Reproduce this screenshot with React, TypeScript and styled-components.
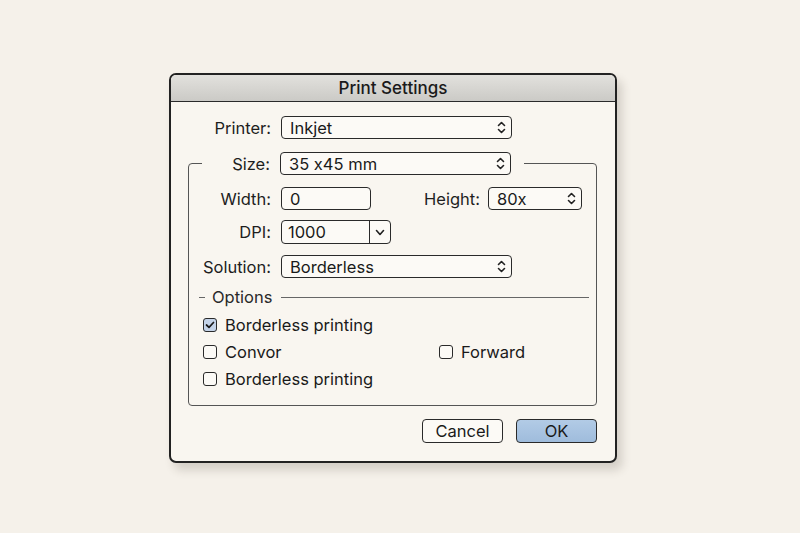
import React from 'react';
import styled, { createGlobalStyle } from 'styled-components';

const GlobalStyle = createGlobalStyle`
	html, body {
		margin: 0;
		padding: 0;
		background: #f5f1ea;
	}
	body {
		font-family: Inter, 'Liberation Sans', sans-serif;
		font-feature-settings: 'calt' 0;
		color: #1e1e1e;
	}
`;

const Page = styled.div`
	width: 800px;
	height: 533px;
	box-sizing: border-box;
	padding: 73px 0 0 169px;
	background: #f5f1ea;
`;

const Dialog = styled.div`
	width: 448px;
	height: 390px;
	box-sizing: border-box;
	border: 2px solid #222;
	border-radius: 7px;
	background: #f9f6f0;
	box-shadow: 5px 7px 10px rgba(60, 50, 40, 0.18);
	overflow: hidden;
	display: flex;
	flex-direction: column;
`;

const TitleBar = styled.div`
	height: 26px;
	display: flex;
	align-items: center;
	justify-content: center;
	background: linear-gradient(#e2e1dd, #cbcac6);
	border-bottom: 1.5px solid #2a2a2a;
	font-size: 17px;
	font-weight: 500;
	color: #1a1a1a;
`;

const Body = styled.div`
	padding: 14px 18px 0 17px;
	display: flex;
	flex-direction: column;
`;

const Row = styled.div<{ $labelWidth: number; $mt?: number }>`
	display: flex;
	align-items: center;
	gap: 10px;
	margin-top: ${({ $mt }) => $mt ?? 0}px;
	& > label {
		width: ${({ $labelWidth }) => $labelWidth}px;
	}
`;

const Label = styled.label`
	font-size: 16.5px;
	text-align: right;
	white-space: nowrap;
	color: #1e1e1e;
`;

const Field = styled.div<{ $width: number }>`
	width: ${({ $width }) => $width}px;
	height: 23px;
	box-sizing: border-box;
	border: 1.5px solid #2a2a2a;
	border-radius: 4px;
	background: #fcfaf6;
	display: flex;
	align-items: center;
	padding-left: 8px;
	font-size: 16.5px;
	color: #1a1a1a;
`;

const SelectText = styled.span`
	flex: 1;
`;

const Arrows = styled.span`
	width: 20px;
	display: flex;
	justify-content: center;
	align-items: center;
`;

const Combo = styled.div`
	width: 110px;
	height: 24px;
	box-sizing: border-box;
	border: 1.5px solid #2a2a2a;
	border-radius: 4px;
	background: #fcfaf6;
	display: flex;
	font-size: 16.5px;
	color: #1a1a1a;
`;

const ComboText = styled.span`
	flex: 1;
	padding-left: 6px;
	display: flex;
	align-items: center;
`;

const ComboButton = styled.span`
	width: 20px;
	border-left: 1.5px solid #2a2a2a;
	display: flex;
	align-items: center;
	justify-content: center;
`;

const Group = styled.fieldset`
	margin: 13px 0 0 0;
	padding: 0 0 17px 0;
	border: 1.2px solid #555;
	border-radius: 4px;
	min-width: 0;
`;

const Legend = styled.legend`
	margin-left: 13px;
	padding: 0 13px 0 0;
	display: flex;
	align-items: center;
	gap: 10px;
	& > label {
		width: 68px;
	}
`;

const HeightPart = styled.div`
	margin-left: auto;
	margin-right: 14px;
	display: flex;
	align-items: center;
	gap: 8px;
`;

const OptionsHeader = styled.div`
	margin-top: 9px;
	padding: 0 7px 0 10px;
	display: flex;
	align-items: center;
	font-size: 16.5px;
	color: #2a2a2a;
	&::after {
		content: '';
		flex: 1;
		height: 1px;
		background: #666;
		margin-left: 9px;
	}
`;

const Dash = styled.span`
	width: 6px;
	height: 1px;
	background: #666;
	margin-right: 7px;
`;

const CheckGrid = styled.div`
	margin: 8px 0 0 14px;
	display: grid;
	grid-template-columns: 236px auto;
	row-gap: 8px;
`;

const CheckItem = styled.div`
	display: flex;
	align-items: center;
	gap: 8px;
	font-size: 16.5px;
	height: 19px;
	color: #1a1a1a;
`;

const Box = styled.span<{ $checked?: boolean }>`
	width: 14px;
	height: 14px;
	box-sizing: border-box;
	border: 1.5px solid #2a2a2a;
	border-radius: 3px;
	background: ${({ $checked }) => ($checked ? '#c4d3e8' : '#fcfaf6')};
	display: flex;
	align-items: center;
	justify-content: center;
`;

const Buttons = styled.div`
	margin-top: 13px;
	display: flex;
	justify-content: flex-end;
	gap: 13px;
`;

const Button = styled.button<{ $primary?: boolean }>`
	width: 81px;
	height: 24px;
	box-sizing: border-box;
	border: 1.5px solid #2a2a2a;
	border-radius: 4px;
	background: ${({ $primary }) =>
		$primary ? 'linear-gradient(#b2cbe6, #9fbcdc)' : '#fcfaf6'};
	font-family: Inter, 'Liberation Sans', sans-serif;
	font-size: 16.5px;
	color: #1a1a1a;
	padding: 0;
	cursor: pointer;
`;

const UpDown = () => (
	<svg width="9" height="13" viewBox="0 0 9 13">
		<path d="M1.5 4.5 L4.5 1.5 L7.5 4.5" fill="none" stroke="#222" strokeWidth="1.6" strokeLinecap="round" strokeLinejoin="round" />
		<path d="M1.5 8.5 L4.5 11.5 L7.5 8.5" fill="none" stroke="#222" strokeWidth="1.6" strokeLinecap="round" strokeLinejoin="round" />
	</svg>
);

const Chevron = () => (
	<svg width="10" height="7" viewBox="0 0 10 7">
		<path d="M1.5 1.5 L5 5.5 L8.5 1.5" fill="none" stroke="#222" strokeWidth="1.6" strokeLinecap="round" strokeLinejoin="round" />
	</svg>
);

const Check = () => (
	<svg width="10" height="8" viewBox="0 0 10 8">
		<path d="M1.5 4 L4 6.3 L8.5 1.5" fill="none" stroke="#1a1a1a" strokeWidth="1.7" strokeLinecap="round" strokeLinejoin="round" />
	</svg>
);

const Select: React.FC<{ width: number; value: string }> = ({ width, value }) => (
	<Field $width={width}>
		<SelectText>{value}</SelectText>
		<Arrows>
			<UpDown />
		</Arrows>
	</Field>
);

const Checkbox: React.FC<{ label: string; checked?: boolean }> = ({ label, checked }) => (
	<CheckItem>
		<Box $checked={checked}>{checked && <Check />}</Box>
		{label}
	</CheckItem>
);

export default function App() {
	return (
		<Page>
			<GlobalStyle />
			<Dialog>
				<TitleBar>Print Settings</TitleBar>
				<Body>
					<Row $labelWidth={83}>
						<Label>Printer:</Label>
						<Select width={231} value='Inkjet' />
					</Row>
					<Group>
						<Legend>
							<Label>Size:</Label>
							<Select width={231} value='35 x45 mm' />
						</Legend>
						<Row $labelWidth={82} $mt={12}>
							<Label>Width:</Label>
							<Field $width={90}>0</Field>
							<HeightPart>
								<Label>Height:</Label>
								<Select width={94} value='80x' />
							</HeightPart>
						</Row>
						<Row $labelWidth={82} $mt={10}>
							<Label>DPI:</Label>
							<Combo>
								<ComboText>1000</ComboText>
								<ComboButton>
									<Chevron />
								</ComboButton>
							</Combo>
						</Row>
						<Row $labelWidth={82} $mt={11}>
							<Label>Solution:</Label>
							<Select width={231} value='Borderless' />
						</Row>
						<OptionsHeader>
							<Dash />
							Options
						</OptionsHeader>
						<CheckGrid>
							<Checkbox label='Borderless printing' checked />
							<span />
							<Checkbox label='Convor' />
							<Checkbox label='Forward' />
							<Checkbox label='Borderless printing' />
						</CheckGrid>
					</Group>
					<Buttons>
						<Button>Cancel</Button>
						<Button $primary>OK</Button>
					</Buttons>
				</Body>
			</Dialog>
		</Page>
	);
}
